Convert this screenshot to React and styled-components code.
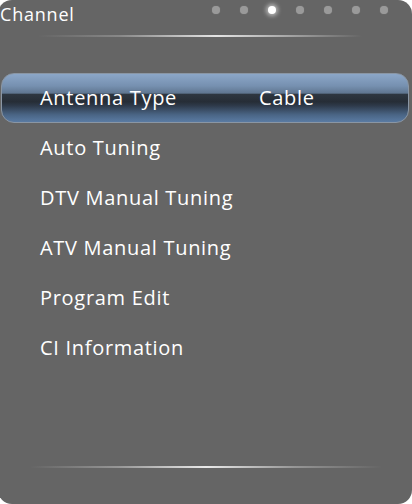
import React from 'react'
import styled, { createGlobalStyle } from 'styled-components'

const ITEMS = [
  { label: 'Antenna Type', value: 'Cable' },
  { label: 'Auto Tuning' },
  { label: 'DTV Manual Tuning' },
  { label: 'ATV Manual Tuning' },
  { label: 'Program Edit' },
  { label: 'CI Information' },
]

const PAGES = 7
const ACTIVE_PAGE = 2

export default function App() {
  return (
    <>
      <GlobalStyle />
      <Panel>
        <Header>
          <Title>Channel</Title>
          <Dots>
            {Array.from({ length: PAGES }).map((_, i) => (
              <Dot key={i} active={i === ACTIVE_PAGE} />
            ))}
          </Dots>
        </Header>
        <TopDivider />
        <Menu>
          {ITEMS.map((item, i) => (
            <Row key={item.label} selected={i === 0}>
              <Label>{item.label}</Label>
              {item.value && <Value>{item.value}</Value>}
            </Row>
          ))}
        </Menu>
        <BottomDivider />
      </Panel>
    </>
  )
}

const GlobalStyle = createGlobalStyle`
  html, body {
    margin: 0;
    padding: 0;
    background: #ffffff;
    overflow: hidden;
  }
`

const Panel = styled.div`
  width: 414px;
  height: 504px;
  margin-left: -2px;
  border-radius: 14px;
  background: #656565;
  display: flex;
  flex-direction: column;
  font-family: "Open Sans", "Noto Sans", sans-serif;
  color: #ffffff;
  overflow: hidden;
`

const Header = styled.div`
  height: 28px;
  display: flex;
  align-items: flex-start;
  justify-content: space-between;
  padding-left: 2px;
`

const Title = styled.div`
  font-size: 18px;
  line-height: 28px;
  letter-spacing: 0.8px;
`

const Dots = styled.div`
  display: flex;
  gap: 20px;
  padding-top: 6px;
  padding-right: 24px;
`

const Dot = styled.span`
  width: 8px;
  height: 8px;
  border-radius: 50%;
  background: ${props => props.active ? '#ffffff' : '#9a9a9a'};
  box-shadow: ${props => props.active ? '0 0 4px 2px rgba(255,255,255,0.55)' : '0 0 1px 0 rgba(154,154,154,0.8)'};
`

const TopDivider = styled.div`
  height: 2px;
  margin: 7px 50px 0 40px;
  background: linear-gradient(to right,
    rgba(220,220,220,0) 0%,
    rgba(200,200,200,0.35) 25%,
    rgba(235,235,235,0.95) 55%,
    rgba(220,220,220,0.6) 75%,
    rgba(200,200,200,0) 100%);
`

const Menu = styled.div`
  display: flex;
  flex-direction: column;
  margin-top: 36px;
  padding: 0 3px;
`

const Row = styled.div`
  height: 50px;
  box-sizing: border-box;
  display: flex;
  align-items: center;
  padding-left: 38px;
  font-size: 20px;
  letter-spacing: 0.7px;
  border-radius: 13px;
  border: 1px solid ${props => props.selected ? '#8a96a4' : 'transparent'};
  background: ${props => props.selected
    ? 'linear-gradient(to bottom, #8ca7c8 0%, #7690b0 25%, #5f7690 40%, #2e3741 42%, #262d36 58%, #2e3a4a 66%, #4a6585 85%, #5a7ba3 100%)'
    : 'transparent'};
`

const Label = styled.span`
  width: 219px;
  line-height: 1;
`

const Value = styled.span`
  line-height: 1;
`

const BottomDivider = styled.div`
  height: 2px;
  margin: auto 30px 36px 32px;
  background: linear-gradient(to right,
    rgba(220,220,220,0) 0%,
    rgba(210,210,210,0.45) 25%,
    rgba(240,240,240,0.95) 50%,
    rgba(210,210,210,0.45) 75%,
    rgba(220,220,220,0) 100%);
`
